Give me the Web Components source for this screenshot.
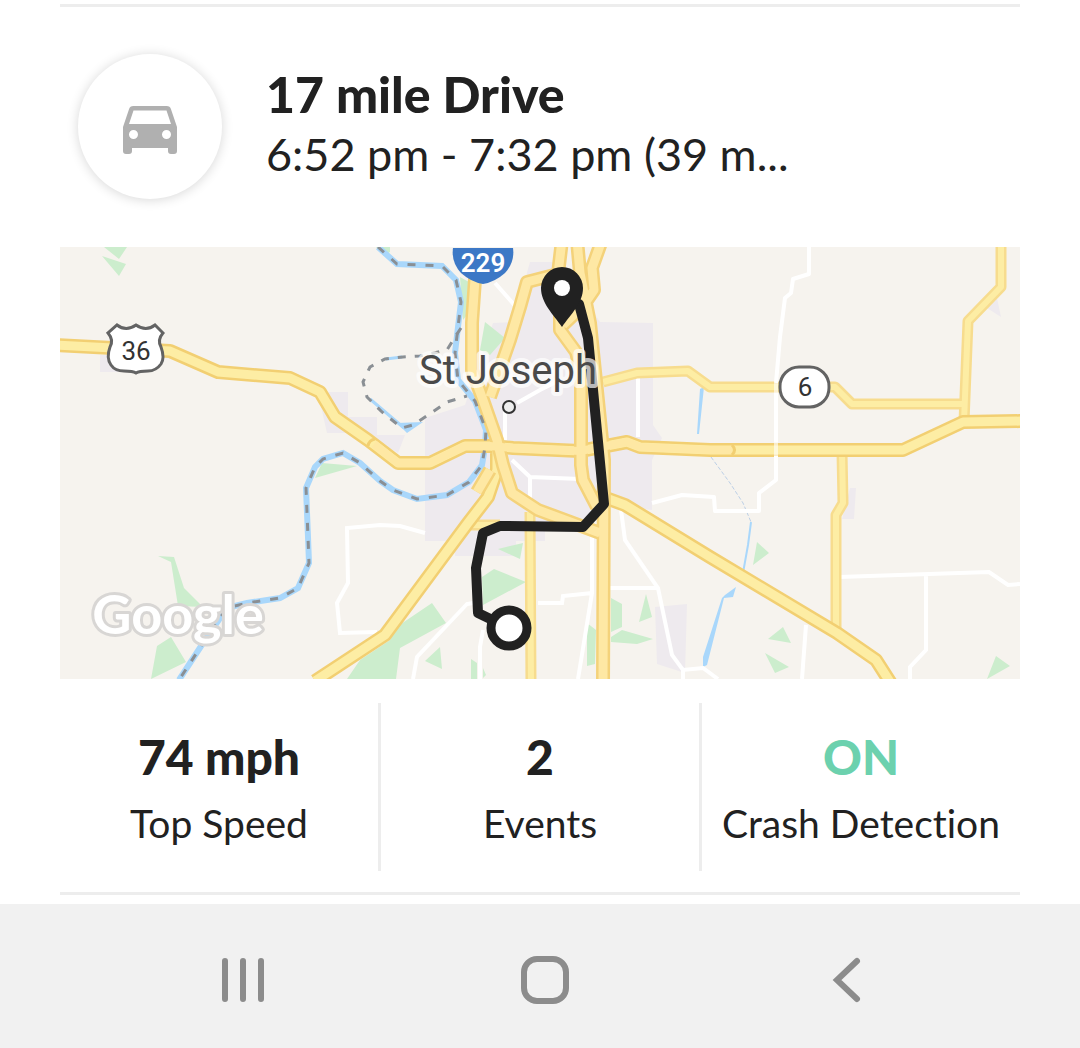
<!DOCTYPE html>
<html lang="en">
<head>
<meta charset="utf-8">
<meta name="viewport" content="width=device-width, initial-scale=1">
<title>17 mile Drive</title>
<style>
  body {
    margin: 0;
    min-height: 100vh;
    display: flex;
    flex-direction: column;
    background: #fff;
    color: #212121;
    font-family: Lato, "Liberation Sans", sans-serif;
    font-variant-ligatures: none;
  }
</style>
</head>
<body>

<trip-card>
  <trip-header slot="header">
    <span slot="title">17 mile Drive</span>
    <span slot="time">6:52 pm - 7:32 pm (39 m...</span>
  </trip-header>
  <trip-map slot="map"></trip-map>
  <trip-stat slot="stats" label="Top Speed">74 mph</trip-stat>
  <trip-stat slot="stats" label="Events">2</trip-stat>
  <trip-stat slot="stats" label="Crash Detection" on>ON</trip-stat>
</trip-card>
<system-nav></system-nav>

<script>
// Attaches an open shadow root and fills it from a template.
class BaseElement extends HTMLElement {
  constructor() {
    super();
    this.attachShadow({ mode: "open" });
  }

  connectedCallback() {
    const template = document.createElement("template");
    template.innerHTML = this.getStyles() + this.getTemplate();
    this.shadowRoot.replaceChildren(template.content.cloneNode(true));
  }
}

class TripCard extends BaseElement {
  getTemplate() {
    return `
      <article>
        <slot name="header"></slot>
        <slot name="map"></slot>
        <div class="stats"><slot name="stats"></slot></div>
      </article>
    `;
  }

  getStyles() {
    return `
      <style>
        :host {
          display: block;
          flex: 1;
          padding: 4px 60px 8px;
        }

        article {
          border-top: 3px solid #ededed;
          border-bottom: 3px solid #ededed;
        }

        .stats {
          display: flex;
          padding: 24px 0 21px;
        }
      </style>
    `;
  }
}

class TripHeader extends BaseElement {
  getTemplate() {
    return `
      <div class="badge">
        <svg viewBox="0 0 54 48" aria-hidden="true">
          <path fill="#b0b0b0" fill-rule="evenodd" d="M48 3.200A4.500 4.500 0 0 0 43.700 0H10.300A4.500 4.500 0 0 0 6 3.200L0 21v24a3 3 0 0 0 3 3h3a3 3 0 0 0 3-3v-3h36v3a3 3 0 0 0 3 3h3a3 3 0 0 0 3-3V21zM10.500 33a4.500 4.500 0 1 1 0-9 4.500 4.500 0 0 1 0 9zm33 0a4.500 4.500 0 1 1 0-9 4.500 4.500 0 0 1 0 9zM6 18l4.500-13.500h33L48 18z"/>
        </svg>
      </div>
      <div class="text">
        <h2><slot name="title"></slot></h2>
        <p><slot name="time"></slot></p>
      </div>
    `;
  }

  getStyles() {
    return `
      <style>
        :host {
          display: flex;
          align-items: center;
          gap: 44px;
          padding: 47px 18px 48px;
        }

        .badge {
          display: flex;
          align-items: center;
          justify-content: center;
          flex: none;
          width: 144px;
          height: 145px;
          border-radius: 50%;
          box-shadow: 0 1px 12px rgba(0, 0, 0, 0.16);
        }

        svg {
          width: 54px;
          margin-top: 6px;
        }

        .text {
          padding-bottom: 6px;
        }

        h2, p {
          margin: 0;
          line-height: 60px;
          white-space: nowrap;
        }

        h2 {
          font-size: 50px;
          font-weight: 900;
        }

        p {
          font-size: 45px;
        }
      </style>
    `;
  }
}

class TripMap extends BaseElement {
  // Draws each road twice: a darker casing below, then the fill on top.
  roads(list, casing, fill, width) {
    const path = list.join("");
    return `
      <path d="${path}" stroke="${casing}" stroke-width="${width}"/>
      <path d="${path}" stroke="${fill}" stroke-width="${width - 5}"/>
    `;
  }

  getTemplate() {
    const river = "M378 247L397 264L442 266L456 280L461 302L458 327L455 353L458 380L475 401L486 430L485 447L482 465L469 482L447 495L417 499L393 490L380 481L360 463L343 453L323 459L315 467L306 488L308 537L309 563L298 588L280 598L247 603L227 608L207 637L179 680";

    const minor = [
      "M1001 240V287L968 321L964 422",
      "M603 382L637 373L688 371L710 387H835L852 404H964",
      "M842 452L843 503L836 515V632",
      "M468 525H500",
      "M530 512L531 685"
    ];

    const major = [
      "M55 345L170 351L218 372L290 378L320 392L335 417L368 440L398 463H430L465 446H490L513 448L580 451L627 442L640 447L710 450H903L963 422L1025 421",
      "M497 447V470L488 497L468 523L385 635L315 681",
      "M606 498L625 505L710 557L837 633L876 660L892 685"
    ];

    const highway = [
      "M562 240L558 274L527 282L520 307L510 340L490 397",
      "M602 240L592 268L594 290L583 306L563 325",
      "M560 310V330L576 352L581 373V465L583 480L597 507",
      "M490 470L477 492",
      "M477 250L472 323V370L483 400L497 440L503 465L512 493L538 510L600 533",
      "M577 240L580 273L590 323L602 440L604 460L603 685"
    ];

    return `
      <svg viewBox="60 247 960 432" role="img" aria-label="Map of the drive through St Joseph">
        <rect x="60" y="247" width="960" height="432" fill="#f6f3ee"/>

        <g fill="#eeeaee">
          <path d="M425 418L465 405L493 323L513 322L530 262H560L600 322L653 323V425L662 438L652 460V510L610 505L585 520L545 525V541H516V556H455V541H425z"/>
          <path d="M329 392H348V417H377V435H405L398 453L375 440L350 433H327L321 406z"/>
          <path d="M997 298L1001 317L987 308zM850 488H856L854 519H842zM655 607L687 604L685 673L657 664zM100 355H118V372H100z"/>
        </g>

        <g fill="#ccedcd">
          <path d="M104 247H127L119 259zM102 256L126 264L119 276zM376 247H390V252L384 256zM460 277L469 282L467 315L463 320zM485 322L505 338L490 355L480 350z"/>
          <path d="M158 556L174 557L184 588L203 607L178 606L171 562zM157 646L171 637L186 662L151 679zM315 478L322 463L357 466z"/>
          <path d="M347 679L360 660L390 640L395 628L432 603L446 623L400 648L396 679zM498 549L523 543L520 559zM482 577L494 569L526 582L483 605zM425 661L440 647L442 669zM471 659L477 663V679H471zM483 668L486 675L483 678z"/>
          <path d="M611 598L622 604V627L611 632zM611 637L622 630L653 639L637 644L611 642zM587 623L596 630L595 664L587 666zM646 594L652 617L639 622z"/>
          <path d="M757 542L769 553L753 565zM768 639L783 627L791 643zM765 653L789 667L775 673zM996 656L1010 666L987 679z"/>
        </g>

        <g fill="#a9d7fb">
          <path d="M397 423L423 422L407 433zM697 434L700 389L704 387L699 434zM736 587L725 595L722 598L703 657V667L707 665L724 598L733 597z"/>
          <g fill="none" stroke="#a9d7fb">
            <path d="${river}" stroke-width="6"/>
            <path d="M370 399L404 428M386 359L402 357" stroke-width="3"/>
            <path d="M751 522L748 545L743 573" stroke-width="2"/>
            <path d="M711 457L730 483L743 503L751 522" stroke="#bccfe6" stroke-dasharray="4 2"/>
          </g>
        </g>

        <g fill="none" stroke="#fff" stroke-width="4">
          <path d="M839 577L989 572L1008 585L1020 584M926 575V650L910 667V679M806 625L802 679"/>
          <path d="M621 510L625 540L658 588L672 655L683 670L703 668L718 679M683 670V679M605 588H658M592 530V593L578 679M592 593L563 596L562 603H538"/>
          <path d="M425 533L400 526L380 525L347 528L348 583L337 603L340 633L377 632M473 603L467 604L417 657L413 679M483 630L480 647V679"/>
          <path d="M512 460L530 477L580 479M530 477V512M495 283L517 308M505 407V440M517 403L540 390L560 380M638 378V437M592 500V520"/>
        </g>

        <g fill="none" stroke-linejoin="round">
          ${this.roads(minor, "#f7dc8e", "#fdeda4", 11)}
          ${this.roads(major, "#f2cf72", "#fdeda4", 14)}
          ${this.roads(highway, "#f4d27a", "#fee8a4", 14)}
          <path d="M374 444L398 463H430L465 446H490L513 448L580 451L627 442L640 447L710 450H732" stroke="#fee8a4" stroke-width="8"/>
          <path d="M368 446Q369 440 375 439M732 445Q737 450 732 455" stroke="#f2cf72" stroke-width="3"/>
          <path d="M809 247V274L793 279L791 293L785 298L780 337L776 383M776 393V442M776 456V480L759 493V511H715L714 497L682 495L652 503" stroke="#fff" stroke-width="4"/>
          <path d="M776 383V393M776 442V456" stroke="#fff" stroke-opacity="0.6" stroke-width="4"/>
        </g>

        <g fill="none" stroke="#8a8f94" stroke-width="3">
          <path d="${river}" stroke-dasharray="8 10"/>
          <path d="M461 328L455 337L447 350L420 356L403 357L385 359L370 367L363 382L367 397L382 412L402 428L413 425L428 415L447 402L467 396" stroke-dasharray="8 9"/>
        </g>

        <g stroke="#636363" stroke-width="3" fill="#fff">
          <path d="M117 325Q126 332 136 325Q146 332 155 325L163 333Q157 340 161 347Q165 358 161 364Q156 371 148 371Q139 371 136 373Q133 371 124 371Q115 371 111 365Q106 358 110 347Q114 340 108 333z"/>
          <rect x="780" y="367" width="49" height="40" rx="19"/>
        </g>
        <path d="M453 248H513Q515 262 505 273Q495 282 483 284Q471 282 461 273Q451 262 453 248z" fill="#3c78c6"/>
        <circle cx="509" cy="407" r="6" fill="#eee" stroke="#333" stroke-width="2"/>

        <path d="M579 304L588 338L604 504L583 527L500 526L483 533L476 568L478 613L509 628" fill="none" stroke="#212121" stroke-width="10" stroke-linejoin="round" stroke-linecap="round"/>
        <circle cx="509" cy="628" r="18" fill="#fff" stroke="#212121" stroke-width="9"/>
        <path d="M562 267A21 21 0 0 1 583 288C583 303 571 314 562 327C553 314 541 303 541 288A21 21 0 0 1 562 267z" fill="#212121"/>
        <circle cx="562" cy="288" r="8" fill="#fff"/>

        <g class="labels">
          <text class="num" x="136" y="360">36</text>
          <text class="num" x="805" y="396">6</text>
          <text class="interstate" x="483" y="272">229</text>
          <text class="city" x="508" y="384">St Joseph</text>
          <text class="brand" x="178" y="634">Google</text>
        </g>
      </svg>
    `;
  }

  getStyles() {
    return `
      <style>
        :host {
          display: block;
        }

        svg {
          display: block;
          width: 100%;
        }

        .labels {
          font-family: Roboto, sans-serif;
          font-size: 26px;
          text-anchor: middle;
        }

        .num {
          fill: #333;
        }

        .interstate {
          fill: #fff;
          font-weight: 600;
        }

        .city {
          fill: #4a4a4a;
          font-size: 40px;
          stroke: rgba(255, 255, 255, 0.7);
          stroke-width: 8px;
          stroke-linejoin: round;
          paint-order: stroke;
        }

        .brand {
          fill: #fff;
          font-family: Lato, sans-serif;
          font-size: 54px;
          font-weight: 700;
          stroke: #d8d6d4;
          stroke-width: 6px;
          stroke-linejoin: round;
          paint-order: stroke;
        }
      </style>
    `;
  }
}

class TripStat extends BaseElement {
  getTemplate() {
    return `
      <strong><slot></slot></strong>
      <span>${this.getAttribute("label")}</span>
    `;
  }

  getStyles() {
    return `
      <style>
        :host {
          display: flex;
          flex: 1;
          flex-direction: column;
          align-items: center;
          gap: 12px;
          padding: 24px 0;
        }

        :host(:not(:last-of-type)) {
          border-right: 3px solid #ededed;
        }

        :host([on]) strong {
          color: #6cd1ae;
        }

        strong {
          font-size: 48px;
          font-weight: 900;
          line-height: 60px;
        }

        span {
          font-size: 39px;
          line-height: 48px;
          white-space: nowrap;
        }
      </style>
    `;
  }
}

class SystemNav extends BaseElement {
  getTemplate() {
    return `
      <nav>
        <button aria-label="Recent apps">
          <svg viewBox="0 0 48 48"><path d="M6 5v38M24 5v38M42 5v38"/></svg>
        </button>
        <button aria-label="Home">
          <svg viewBox="0 0 48 48"><rect x="3" y="3" width="42" height="42" rx="13"/></svg>
        </button>
        <button aria-label="Back">
          <svg viewBox="0 0 48 48"><path d="M34 5L14 24L34 43"/></svg>
        </button>
      </nav>
    `;
  }

  getStyles() {
    return `
      <style>
        :host {
          display: block;
          background: #f1f1f1;
        }

        nav {
          display: grid;
          grid-template-columns: repeat(3, 1fr);
          padding: 0 82px 0 92px;
        }

        button {
          display: flex;
          align-items: center;
          justify-content: center;
          height: 144px;
          padding: 8px 0 0;
          border: 0;
          background: none;
        }

        svg {
          width: 48px;
          height: 48px;
          fill: none;
          stroke: #8c8c8c;
          stroke-width: 6px;
          stroke-linecap: round;
        }
      </style>
    `;
  }
}

customElements.define("trip-card", TripCard);
customElements.define("trip-header", TripHeader);
customElements.define("trip-map", TripMap);
customElements.define("trip-stat", TripStat);
customElements.define("system-nav", SystemNav);
</script>
</body>
</html>
